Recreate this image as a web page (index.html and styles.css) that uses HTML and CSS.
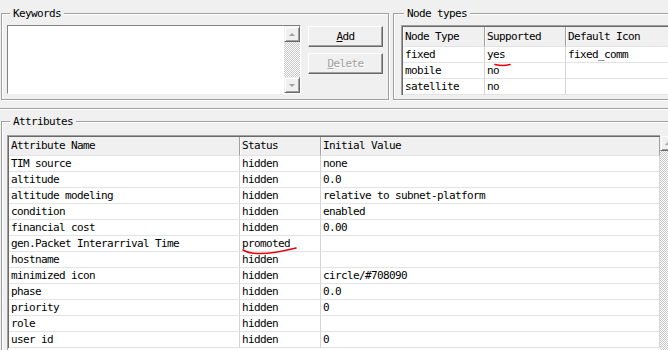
FILE: index.html
```html
<!DOCTYPE html>
<html lang="en">
<head>
  <meta charset="UTF-8" />
  <title>Node Model Attributes</title>
  <link rel="stylesheet" href="styles.css">
</head>
<body>
  <div class="top">
    <fieldset class="group keywords">
      <legend>Keywords</legend>
      <div class="kw-body">
        <div class="listbox">
          <div class="list-area"></div>
          <div class="vscroll">
            <div class="sbtn"><span class="arrow up"></span></div>
            <div class="track"></div>
            <div class="sbtn"><span class="arrow down"></span></div>
          </div>
        </div>
        <div class="buttons">
          <button class="btn"><u>A</u>dd</button>
          <button class="btn" disabled><u>D</u>elete</button>
        </div>
      </div>
    </fieldset>

    <fieldset class="group nodetypes">
      <legend>Node types</legend>
      <div class="gridbox">
        <table class="grid">
          <colgroup><col style="width:82px"><col style="width:81px"><col style="width:102px"></colgroup>
          <thead>
            <tr><th>Node Type</th><th>Supported</th><th>Default Icon</th></tr>
          </thead>
          <tbody>
            <tr><td>fixed</td><td>yes</td><td>fixed_comm</td></tr>
            <tr><td>mobile</td><td>no</td><td></td></tr>
            <tr><td>satellite</td><td>no</td><td></td></tr>
          </tbody>
        </table>
      </div>
    </fieldset>
  </div>

  <div class="bottom">
    <fieldset class="group attributes">
      <legend>Attributes</legend>
      <div class="attr-wrap">
        <div class="gridbox attr-box">
          <table class="grid">
            <colgroup><col style="width:231px"><col style="width:81px"><col style="width:339px"></colgroup>
            <thead>
              <tr><th>Attribute Name</th><th>Status</th><th>Initial Value</th></tr>
            </thead>
            <tbody>
              <tr><td>TIM source</td><td>hidden</td><td>none</td></tr>
              <tr><td>altitude</td><td>hidden</td><td>0.0</td></tr>
              <tr><td>altitude modeling</td><td>hidden</td><td>relative to subnet-platform</td></tr>
              <tr><td>condition</td><td>hidden</td><td>enabled</td></tr>
              <tr><td>financial cost</td><td>hidden</td><td>0.00</td></tr>
              <tr><td>gen.Packet Interarrival Time</td><td>promoted</td><td></td></tr>
              <tr><td>hostname</td><td>hidden</td><td></td></tr>
              <tr><td>minimized icon</td><td>hidden</td><td>circle/#708090</td></tr>
              <tr><td>phase</td><td>hidden</td><td>0.0</td></tr>
              <tr><td>priority</td><td>hidden</td><td>0</td></tr>
              <tr><td>role</td><td>hidden</td><td></td></tr>
              <tr><td>user id</td><td>hidden</td><td>0</td></tr>
            </tbody>
          </table>
        </div>
        <div class="vscroll attr-scroll">
          <div class="sbtn"><span class="arrow up"></span></div>
          <div class="track"></div>
        </div>
      </div>
    </fieldset>
  </div>

  <!-- hand-drawn red marks over the grid -->
  <svg class="marks" width="668" height="350" viewBox="0 0 668 350">
    <path d="M495 64.5 Q503 66.5 510 64.5" />
    <path d="M243 250 Q256 258 296 248" />
  </svg>
</body>
</html>
```

FILE: styles.css
```css
/* Window */
:root {
  --face: #f0f0f0;
  --shadow: #a0a0a0;
  --dark: #696969;
  --light: #ffffff;
  --row-line: #e3e3e3;
  --col-line: #d4d4d4;
}

html, body {
  margin: 0;
  width: 668px;
  height: 350px;
  overflow: hidden;
  background: var(--face);
  color: #000;
  font-family: "DejaVu Sans Mono", "Liberation Mono", monospace;
  font-size: 11px;
  letter-spacing: -0.62px;
  position: relative;
}

/* Group boxes */
.group {
  margin: 0;
  border: 1px solid var(--shadow);
  box-shadow: inset 1px 1px 0 var(--light), 1px 1px 0 var(--light);
  flex-shrink: 0;
  box-sizing: border-box;
  min-width: 0;
}
.group legend {
  margin-left: 3px;
  padding: 0 3px;
  line-height: 13px;
  background: var(--face);
}

.top {
  display: flex;
  align-items: flex-start;
}
.keywords {
  margin: 7px 0 0 1px;
  width: 388px;
  padding: 5px;
}
/* runs off the right edge of the window: no right border */
.nodetypes {
  margin: 7px 0 0 4px;
  width: 275px;
  padding: 5px 0 4px 7px;
  border-right: 0;
  box-shadow: inset 1px 1px 0 var(--light), 0 1px 0 var(--light);
}

.kw-body {
  display: flex;
  gap: 7px;
}

/* Keyword list */
.listbox {
  width: 294px;
  height: 69px;
  box-sizing: border-box;
  border: 1px solid var(--light);
  border-top-color: #828282;
  border-left-color: #828282;
  background: #fff;
  display: flex;
}
.list-area { flex: 1; }

.vscroll {
  width: 16px;
  display: flex;
  flex-direction: column;
  flex-shrink: 0;
}
.track {
  flex: 1;
  background: repeating-conic-gradient(#c8c8c8 0 25%, #fff 0 50%) 0 0 / 2px 2px;
}
.sbtn {
  height: 16px;
  box-sizing: border-box;
  background: var(--face);
  border: 1px solid var(--dark);
  border-top-color: var(--face);
  border-left-color: var(--face);
  box-shadow: inset 1px 1px 0 var(--light), inset -1px -1px 0 var(--shadow);
  display: flex;
  align-items: center;
  justify-content: center;
}
.arrow {
  width: 0;
  height: 0;
  border-left: 3px solid transparent;
  border-right: 3px solid transparent;
}
.arrow.up { border-bottom: 3px solid var(--shadow); }
.arrow.down { border-top: 3px solid var(--shadow); }

/* Push buttons */
.buttons {
  display: flex;
  flex-direction: column;
  gap: 6px;
  padding-top: 1px;
}
.btn {
  width: 75px;
  height: 21px;
  box-sizing: border-box;
  padding: 0;
  font: inherit;
  letter-spacing: inherit;
  color: #000;
  background: var(--face);
  border: 1px solid var(--dark);
  border-top-color: var(--light);
  border-left-color: var(--light);
  box-shadow: inset -1px -1px 0 var(--shadow);
}
.btn:disabled {
  color: var(--shadow);
  text-shadow: 1px 1px 0 var(--light);
}

/* Grids */
.gridbox {
  border-top: 1px solid var(--shadow);
  border-left: 1px solid var(--shadow);
  width: max-content;
}
.grid {
  table-layout: fixed;
  border-collapse: separate;
  border-spacing: 0;
  border-top: 1px solid var(--dark);
  border-left: 1px solid var(--dark);
  white-space: nowrap;
}
.grid th {
  font-weight: normal;
  text-align: left;
  background: var(--face);
  padding: 0 0 0 2px;
  line-height: 19px;
  border-right: 1px solid var(--shadow);
  border-bottom: 1px solid var(--row-line);
  box-shadow: inset 1px 0 0 var(--light);
  overflow: hidden;
}
.grid td {
  background: #fff;
  padding: 0 0 0 2px;
  line-height: 15px;
  height: 15px;
  border-right: 1px solid var(--col-line);
  border-bottom: 1px solid var(--row-line);
  overflow: hidden;
}
.nodetypes .grid th:last-child,
.nodetypes .grid td:last-child {
  border-right: 0;
}

/* Lower pane */
.bottom {
  margin-top: 8px;
  border-top: 1px solid var(--shadow);
  box-shadow: inset 0 1px 0 var(--light);
  padding-top: 6px;
}
.attributes {
  margin-left: 1px;
  width: 667px;
  padding: 7px 0 0 5px;
  border-right: 0;
  border-bottom: 0;
  box-shadow: inset 1px 1px 0 var(--light);
}
.attributes .grid th { line-height: 18px; }
.attr-wrap {
  display: flex;
  align-items: flex-start;
}
/* the list keeps going below the window */
.attr-box {
  height: 214px;
  background: #fff;
}
/* only the left half of the scrollbar fits in the window */
.attr-scroll {
  width: 8px;
  height: 215px;
  overflow: hidden;
}
.attr-scroll .sbtn,
.attr-scroll .track {
  width: 16px;
}

.marks {
  position: absolute;
  left: 0;
  top: 0;
  pointer-events: none;
}
.marks path {
  fill: none;
  stroke: #e8000b;
  stroke-width: 1.6;
  stroke-linecap: round;
}
```
